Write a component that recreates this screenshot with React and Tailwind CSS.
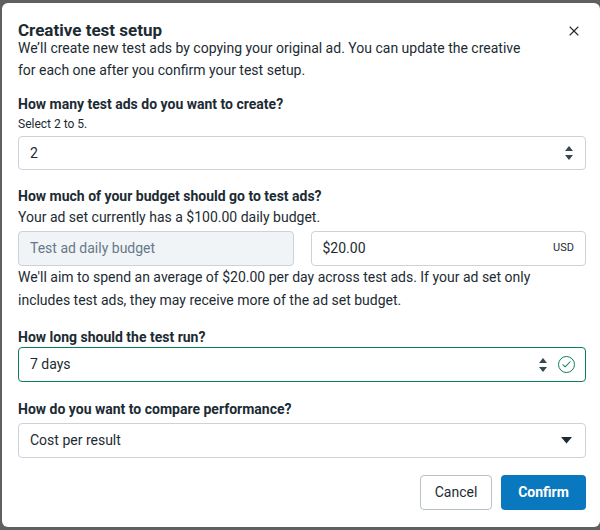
import { X, Check } from "lucide-react";

function Spinner() {
  return (
    <svg width="10" height="20" viewBox="0 0 10 20" className="text-[#344854]">
      <path d="M1 8 L5 3 L9 8 Z" fill="currentColor" />
      <path d="M1 12 L5 17 L9 12 Z" fill="currentColor" />
    </svg>
  );
}

export default function App() {
  return (
    <div
      className="w-[600px] h-[530px] bg-[#5f6062] overflow-hidden relative"
      style={{ fontFamily: "Roboto, 'Noto Sans', sans-serif" }}
    >
      <div className="ml-[2px] mt-[3px] h-[524px] bg-white rounded-[6px] pl-4 pr-[14px] pt-[16px] text-[#1c2b33]">
        <div className="flex items-start justify-between">
          <div>
            <h2 className="text-[17px] font-bold leading-[22px] text-[#1c2b33]">Creative test setup</h2>
            <p className="-mt-[4px] max-w-[518px] text-[14px] leading-[22px] text-[#1c2b33]">
              We’ll create new test ads by copying your original ad. You can update the creative for each one after you confirm your test setup.
            </p>
          </div>
          <button className="mt-[4px] mr-[4px] text-[#1c2b33]" aria-label="Close">
            <X size={16} strokeWidth={1.6} />
          </button>
        </div>

        <div className="mt-[13px]">
          <div className="text-[14px] font-bold leading-[20px]">How many test ads do you want to create?</div>
          <div className="mt-[2px] text-[12px] leading-[16px] text-[#1c2b33]">Select 2 to 5.</div>
          <div className="mt-[4px] h-[34px] border border-[#cbd2d9] rounded-[4px] flex items-center justify-between px-[11px]">
            <span className="text-[14px]">2</span>
            <Spinner />
          </div>
        </div>

        <div className="mt-[16px]">
          <div className="text-[14px] font-bold leading-[20px]">How much of your budget should go to test ads?</div>
          <div className="text-[14px] leading-[22px]">Your ad set currently has a $100.00 daily budget.</div>
          <div className="mt-[3px] flex gap-[17px]">
            <div className="flex-1 h-[35px] bg-[#f1f4f7] border border-[#cbd2d9] rounded-[4px] flex items-center px-[11px] text-[14px] text-[#67788a]">
              Test ad daily budget
            </div>
            <div className="flex-1 h-[35px] border border-[#cbd2d9] rounded-[4px] flex items-center justify-between px-[11px]">
              <span className="text-[14px]">$20.00</span>
              <span className="text-[11px] text-[#1c2b33]">USD</span>
            </div>
          </div>
          <p className="max-w-[530px] text-[14px] leading-[23px]">
            We'll aim to spend an average of $20.00 per day across test ads. If your ad set only includes test ads, they may receive more of the ad set budget.
          </p>
        </div>

        <div className="mt-[15px]">
          <div className="text-[14px] font-bold leading-[20px]">How long should the test run?</div>
          <div className="h-[35px] border border-[#0a7e5a] rounded-[4px] flex items-center justify-between pl-[11px] pr-[10px]">
            <span className="text-[14px]">7 days</span>
            <div className="flex items-center gap-[10px]">
              <Spinner />
              <span className="w-[17px] h-[17px] rounded-full border-[1.5px] border-[#0a7e5a] flex items-center justify-center text-[#0a7e5a]">
                <Check size={11} strokeWidth={2.2} />
              </span>
            </div>
          </div>
        </div>

        <div className="mt-[17px]">
          <div className="text-[14px] font-bold leading-[20px]">How do you want to compare performance?</div>
          <div className="mt-[4px] h-[35px] border border-[#cbd2d9] rounded-[4px] flex items-center justify-between pl-[11px] pr-[13px]">
            <span className="text-[14px]">Cost per result</span>
            <svg width="11" height="7" viewBox="0 0 11 7">
              <path d="M0 0 L11 0 L5.5 6.5 Z" fill="#1c2b33" />
            </svg>
          </div>
        </div>

        <div className="mt-[17px] flex justify-end gap-[9px]">
          <button className="h-[35px] w-[72px] border border-[#b8c0c8] rounded-[4px] text-[14px] text-[#1c2b33] bg-white">
            Cancel
          </button>
          <button className="h-[35px] w-[85px] rounded-[4px] text-[14px] font-bold text-white bg-[#0a78be]">
            Confirm
          </button>
        </div>
      </div>
    </div>
  );
}
